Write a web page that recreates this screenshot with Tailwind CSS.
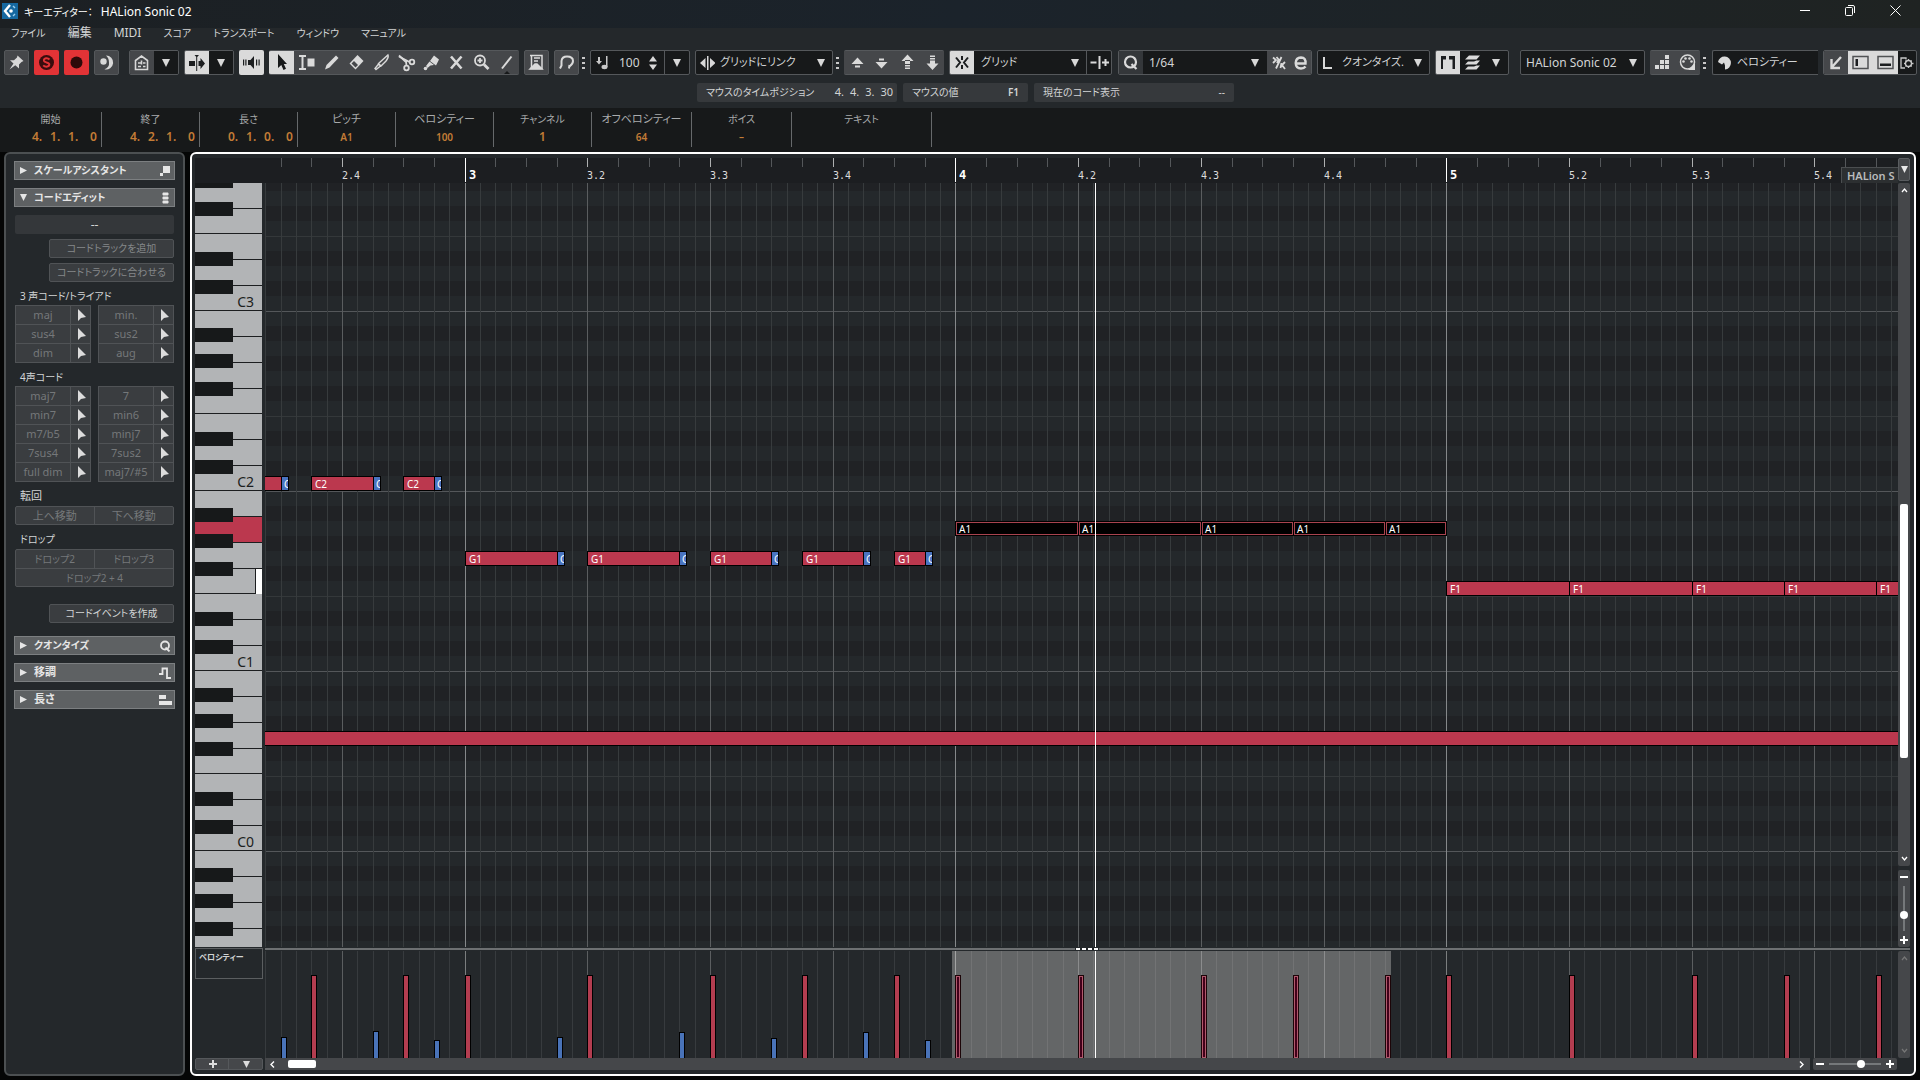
<!DOCTYPE html>
<html lang="ja">
<head>
<meta charset="utf-8">
<title>キーエディター： HALion Sonic 02</title>
<script src="https://cdn.jsdelivr.net/npm/@tailwindcss/browser@4"></script>
</head>
<body class="flex min-h-screen flex-col overflow-x-hidden bg-[#050606] font-['Noto_Sans','Noto_Sans_CJK_JP',sans-serif] text-[11px] text-[#d2d4d5] [font-feature-settings:'palt']">

<header class="shrink-0 bg-[#24282b]">
  <!-- title bar -->
  <div class="flex h-7 items-center bg-linear-to-r from-[#1c2023] via-[#1b232b] to-[#1f2322] pl-[2px] text-xs text-white">
    <svg class="mt-[-6px] h-4 w-4" viewBox="0 0 16 16"><rect width="16" height="16" fill="#1668a0"/><path d="M8 2 3 8l5 6" fill="none" stroke="#fff" stroke-width="2.4"/><circle cx="9" cy="8" r="1.8" fill="#fff"/><path d="m11 3 2 2M11 13l2-2" stroke="#9cd0f0" stroke-width="1.4"/></svg>
    <h1 class="mt-[-4px] ml-[6px] flex gap-2"><span class="text-[10px] leading-[18px]">キーエディター：</span><span class="leading-[17px]">HALion Sonic 02</span></h1>
    <div class="mr-[2px] ml-auto flex pb-[7px]">
      <button aria-label="最小化" class="grid h-5 w-[45px] place-items-center"><svg class="h-[11px] w-[11px]" viewBox="0 0 11 11"><path d="M0 5.5h10" stroke="#fff"/></svg></button>
      <button aria-label="元に戻す" class="grid h-5 w-[45px] place-items-center"><svg class="h-[11px] w-[11px]" viewBox="0 0 11 11" fill="none" stroke="#fff"><rect x=".5" y="2.5" width="7" height="8" rx="1"/><path d="M3 .5h5Q9.500.5 9.500 2v6"/></svg></button>
      <button aria-label="閉じる" class="grid h-5 w-[45px] place-items-center"><svg class="h-[11px] w-[11px]" viewBox="0 0 11 11"><path d="m.5.5 10 10m0-10-10 10" stroke="#fff"/></svg></button>
    </div>
  </div>
  <!-- menu -->
  <nav class="flex h-[22px] items-center gap-[22px] pb-3 pl-[11px] text-[10px]">
    <a href="#">ファイル</a><a href="#" class="text-xs">編集</a><a href="#" class="text-xs">MIDI</a><a href="#">スコア</a><a href="#">トランスポート</a><a href="#">ウィンドウ</a><a href="#">マニュアル</a>
  </nav>

  <!-- toolbar -->
  <div class="flex h-[25px] gap-[5px] pr-1 pl-1 text-xs">
    <button aria-label="固定" class="w-[25px] shrink-0 rounded-xs border border-[#55585b] bg-[#45474a]"><svg viewBox="1 1 23 23"><path d="m13.500 5.500 6 5.500-2 1-2.500 2.500v4l-3.700-3.200L5.500 19.500 9.500 13.500 6 10.200h4l3-2.700z" fill="#d8d8d8"/></svg></button>
    <button aria-label="ソロ" class="w-[25px] shrink-0 rounded-xs bg-[#e23336]"><svg viewBox="0 0 25 25"><circle cx="12.500" cy="12.500" r="7.500" fill="#3a0d0e"/><path d="M15.500 9.500q-1.500-1.500-3.500-1.200-2.500.5-2 2.500.4 1 2.500 1.600 2.800.6 2.800 2.200 0 2-2.800 2.100-2 0-3.300-1.300" fill="none" stroke="#e23336" stroke-width="2"/></svg></button>
    <button aria-label="録音" class="w-[25px] shrink-0 rounded-xs bg-[#e23336]"><svg viewBox="0 0 25 25"><circle cx="12.500" cy="12.500" r="6" fill="#2e0a0a"/></svg></button>
    <button aria-label="レトロスペクティブ録音" class="w-[25px] shrink-0 rounded-xs border border-[#55585b] bg-[#45474a]"><svg viewBox="1 1 23 23"><path d="M12 5.500a7 7 0 1 1-1.500 13.800 6 6 0 0 0 4.500-6.800Q15 8 12 5.500z" fill="#d8d8d8"/><circle cx="9.500" cy="11.500" r="3.200" fill="#d8d8d8"/></svg></button>

    <div class="ml-[5px] flex w-[50px] shrink-0 overflow-hidden rounded-xs border border-[#55585b]">
      <button aria-label="部分表示" class="w-6 bg-[#45474a]"><svg viewBox="1 0 24 24" fill="none" stroke="#d8d8d8" stroke-width="1.600"><path d="M6.500 18.500v-9L12.500 5l6 4.500v9zM9 12h3M14 12h2.500M9 15.500h3M14 15.500h2.500M12.500 9.500v4"/></svg></button>
      <button aria-label="部分表示の選択" class="grid flex-1 place-items-center bg-[#17191a]"><svg class="h-2 w-2" viewBox="0 0 8 8"><path d="M0 0h8L4 8z" fill="#d8d8d8"/></svg></button>
    </div>
    <div class="flex w-[50px] shrink-0 overflow-hidden rounded-xs border border-[#55585b]">
      <button aria-label="オートスクロール" class="w-6 bg-[#dadada]"><svg viewBox="1 0 24 24" fill="#1c1e20"><path d="M12.200 4h1v16h-1zM10.500 4h4.500l-2.200 2.500zM5 10h6v5H5zM14.500 10h2V7l4.500 5.500-4.500 5.500v-3h-2z"/></svg></button>
      <button aria-label="スクロール設定" class="grid flex-1 place-items-center bg-[#17191a]"><svg class="h-2 w-2" viewBox="0 0 8 8"><path d="M0 0h8L4 8z" fill="#d8d8d8"/></svg></button>
    </div>
    <button aria-label="音響フィードバック" class="w-[25px] shrink-0 rounded-xs bg-[#dadada]"><svg viewBox="0 0 25 25" fill="#1c1e20"><path d="M9 10h2.500L15 6v13l-3.500-4H9zM4 9.500h1.200v6H4zM6.300 9.500h1.200v6H6.300zM17 9.500h1.200v6H17zM19.500 9.500h1.200v6h-1.200z"/></svg></button>

    <div class="flex w-[250px] shrink-0 overflow-hidden rounded-xs border-y border-[#55585b] bg-[#45474a]">
      <button aria-label="選択" class="w-[25px] bg-[#dadada]"><svg viewBox="0 1 25 25"><path d="M9 4v14l3.300-3 2.200 5 2.500-1.200-2.200-4.800H18z" fill="#17191a"/></svg></button>
      <button aria-label="範囲" class="w-[25px]"><svg viewBox="0 1 25 25" fill="none" stroke="#dadada" stroke-width="2"><path d="M5 6h7M8.500 6v13M5 19h7"/><path d="M14.500 9.500h5v6h-5z" fill="#dadada"/></svg></button>
      <button aria-label="鉛筆" class="w-[25px]"><svg viewBox="0 1 25 25"><path d="m17 5.500 2.500 2.500-9 9.500L6 19.500 7.500 15z" fill="#dadada"/></svg></button>
      <button aria-label="消しゴム" class="w-[25px]"><svg viewBox="0 1 25 25"><path d="m13.500 5 6 6-8 8.500-6-6z" fill="#dadada"/><path d="m7.500 13.500 4 4 2.500-2.500-4-4z" fill="#45474a"/></svg></button>
      <button aria-label="トリム" class="w-[25px]"><svg viewBox="0 1 25 25"><path d="M19 5q1 2-2 6l-5 5-2.500-2.500zM9.500 14l2 2-4.500 3.500-1-1z" fill="none" stroke="#dadada" stroke-width="1.400"/></svg></button>
      <button aria-label="はさみ" class="w-[25px]"><svg viewBox="0 1 25 25" fill="none" stroke="#dadada" stroke-width="1.800"><path d="m5 6.500 10.500 5.500M12.500 16 12 11"/><path d="m5 5.500 7 6.500"/><circle cx="18" cy="12" r="2.300"/><circle cx="12.500" cy="18" r="2.300"/></svg></button>
      <button aria-label="のり" class="w-[25px]"><svg viewBox="0 1 25 25" fill="#dadada"><path d="m15 5.500 5 4-3 6-6-4.500zM10.500 11.500l4.500 3.500-3.500.5L8.500 18 7 16z"/><circle cx="6.500" cy="18.500" r="1.800"/></svg></button>
      <button aria-label="ミュート" class="w-[25px]"><svg viewBox="0 1 25 25"><path d="m7 6.500 10.500 12M17.500 6.500 7 18.500" stroke="#dadada" stroke-width="2.600"/></svg></button>
      <button aria-label="ズーム" class="w-[25px]"><svg viewBox="0 1 25 25" fill="none" stroke="#dadada" stroke-width="1.800"><circle cx="11" cy="10.500" r="5"/><path d="M8.500 10.500h5M11 8v5"/><path d="m15 14.500 4.500 4.500" stroke-width="2.800"/></svg></button>
      <button aria-label="ライン" class="w-[25px]"><svg viewBox="0 1 25 25"><path d="M17.500 6.500 8 18.500" stroke="#dadada" stroke-width="2"/><path d="m9 25 4-4 4 4z" fill="#17191a"/></svg></button>
    </div>
    <button aria-label="コントローラー" class="w-[25px] shrink-0 rounded-xs border border-[#55585b] bg-[#45474a]"><svg viewBox="1 1 23 23" fill="none" stroke="#dadada" stroke-width="1.500"><path d="M6 5.500h12v13H6M7.500 5v14M10 8h6M10 11h4"/><path d="m6 19 5-5h2l5 5z" fill="#dadada"/></svg></button>
    <button aria-label="カーブ" class="w-[25px] shrink-0 rounded-xs border border-[#55585b] bg-[#45474a]"><svg viewBox="1 1 23 23" fill="none" stroke="#dadada" stroke-width="2"><path d="m6 18.500 1.500-3V11Q8 6.500 13 6.500q6 0 6 4.500 0 3-3.500 5.500M15 18.500l.5-3.500"/></svg></button>
    <div class="-ml-0.5 flex w-[3px] shrink-0 flex-col justify-center gap-[3px]"><i class="h-[2px] bg-[#c8c8c8]"></i><i class="h-[2px] bg-[#c8c8c8]"></i><i class="h-[2px] bg-[#c8c8c8]"></i></div>

    <div class="flex w-[100px] shrink-0 items-center rounded-xs border border-[#55585b] bg-[#17191a]">
      <svg class="ml-[3px] h-[17px] w-[17px] shrink-0" viewBox="0 0 17 17" fill="#c8c8c8"><path d="M2 7h2V3h2v4h2L5 10.500zM12 2h1.500v11H12z"/><ellipse cx="10.500" cy="13" rx="3" ry="2.200"/></svg>
      <input aria-label="ノートベロシティー" value="100" class="ml-2 w-[26px] min-w-0 bg-transparent text-[#d2d4d5]">
      <svg class="ml-1 h-4 w-2 shrink-0" viewBox="0 0 8 16" fill="#d8d8d8"><path d="M0 6.500h8L4 1zM0 9.500h8L4 15z"/></svg>
      <button aria-label="ベロシティーの選択" class="ml-auto grid h-full w-[25px] shrink-0 place-items-center border-l border-[#55585b]"><svg class="h-2 w-2" viewBox="0 0 8 8"><path d="M0 0h8L4 8z" fill="#d8d8d8"/></svg></button>
    </div>
    <label class="relative flex w-[138px] shrink-0 items-center rounded-xs border border-[#55585b] bg-[#17191a]">
      <svg class="ml-1 h-4 w-[15px] shrink-0" viewBox="0 0 15 16" fill="#d8d8d8"><path d="M7 1h1.500v14H7zM5.500 3v10L0 8zM10 3l5.500 5L10 13z" /></svg>
      <select aria-label="グリッドにリンク" class="ml-[5px] w-full appearance-none bg-transparent text-[11px]"><option>グリッドにリンク</option></select>
      <svg class="pointer-events-none absolute right-[7px] h-2 w-2" viewBox="0 0 8 8"><path d="M0 0h8L4 8z" fill="#d8d8d8"/></svg>
    </label>
    <div class="-ml-0.5 flex w-[3px] shrink-0 flex-col justify-center gap-[3px]"><i class="h-[2px] bg-[#c8c8c8]"></i><i class="h-[2px] bg-[#c8c8c8]"></i><i class="h-[2px] bg-[#c8c8c8]"></i></div>

    <div class="flex w-[100px] shrink-0 rounded-xs border-y border-[#55585b] bg-[#45474a]">
      <button aria-label="上へ" class="w-[25px]"><svg viewBox="0 1 25 25" fill="#dadada"><path d="M7.500 14h12l-6-6.500zM11 15.500h5v2h-5z"/></svg></button>
      <button aria-label="下へ" class="w-[25px]"><svg viewBox="0 1 25 25" fill="#dadada"><path d="M6.500 12h12l-6 6.500zM10 8.500h5v2h-5z"/></svg></button>
      <button aria-label="オクターブ上" class="w-[25px]"><svg viewBox="0 1 25 25" fill="#dadada"><path d="M7.500 11h12l-6-6.500zM11 10h5v4h-5zM11 15h5v1.500h-5zM11 17.500h5V19h-5z"/></svg></button>
      <button aria-label="オクターブ下" class="w-[25px]"><svg viewBox="0 1 25 25" fill="#dadada"><path d="M7.500 13.500h12l-6 6.500zM11 10.500h5v4h-5zM11 8h5v1.500h-5zM11 5.500h5V7h-5z"/></svg></button>
    </div>
    <div class="flex w-[163px] shrink-0 overflow-hidden rounded-xs border border-[#55585b] bg-[#17191a]">
      <button aria-label="スナップ" class="w-6 bg-[#dadada]"><svg viewBox="0 0 24 23" fill="none" stroke="#1c1e20" stroke-width="2"><path d="M12 5v4M12 14v4M6 6.500 10 11.500 6 16.500M18 6.500 14 11.500l4 5"/></svg></button>
      <label class="relative flex flex-1 items-center">
        <select aria-label="スナップタイプ" class="ml-[7px] w-full appearance-none bg-transparent text-[11px]"><option>グリッド</option></select>
        <svg class="pointer-events-none absolute right-[7px] h-2 w-2" viewBox="0 0 8 8"><path d="M0 0h8L4 8z" fill="#d8d8d8"/></svg>
      </label>
      <button aria-label="スナップオン/オフ" class="w-[25px] border-l border-[#55585b]"><svg viewBox="0 0 24 23" fill="none" stroke="#dadada" stroke-width="2"><path d="M3.500 11.500h6M12.500 5v13M15 11.500h7M18.500 8v7"/></svg></button>
    </div>
    <div class="ml-px flex w-[194px] shrink-0 overflow-hidden rounded-xs border border-[#55585b] bg-[#17191a]">
      <button aria-label="クオンタイズを適用" class="w-6 bg-[#34373a]"><svg viewBox="0 0 24 23" fill="none" stroke="#dadada" stroke-width="2.200"><circle cx="11.500" cy="11" r="5.500"/><path d="m12.500 13 5 5"/></svg></button>
      <label class="relative flex flex-1 items-center">
        <select aria-label="クオンタイズプリセット" class="ml-[6px] w-full appearance-none bg-transparent text-xs"><option>1/64</option></select>
        <svg class="pointer-events-none absolute right-2 h-2 w-2" viewBox="0 0 8 8"><path d="M0 0h8L4 8z" fill="#d8d8d8"/></svg>
      </label>
      <button aria-label="ソフトクオンタイズ" class="w-[22px] bg-[#45474a]"><svg viewBox="-2 0 22 23" fill="none" stroke="#dadada" stroke-width="1.800"><path d="M12.500 6 7 17.500M4 6.500l3 2.500-3 3M7.500 6l2 2.500L8 12M16 11l-3 3 3 4M12.500 12l-1 5"/></svg></button>
      <button aria-label="クオンタイズパネル" class="w-[22px] bg-[#45474a]"><svg viewBox="-1 0 22 23" fill="none" stroke="#dadada" stroke-width="2.400"><path d="M6 12.500h9.500Q16 6.500 11 6.500q-5.200.3-5.300 5.500.2 5.500 5.300 5.500 3 0 4.500-2"/></svg></button>
    </div>
    <label class="relative flex w-[113px] shrink-0 items-center rounded-xs border border-[#55585b] bg-[#17191a]">
      <svg class="ml-[5px] h-3 w-[9px] shrink-0" viewBox="0 0 9 12"><path d="M1 0v11h8" fill="none" stroke="#d8d8d8" stroke-width="2"/></svg>
      <select aria-label="長さクオンタイズ" class="ml-[10px] w-full appearance-none bg-transparent text-[11px]"><option>クオンタイズ.</option></select>
      <svg class="pointer-events-none absolute right-[7px] h-2 w-2" viewBox="0 0 8 8"><path d="M0 0h8L4 8z" fill="#d8d8d8"/></svg>
    </label>
    <div class="flex w-[74px] shrink-0 overflow-hidden rounded-xs border border-[#55585b] bg-[#17191a]">
      <button aria-label="パート境界線" class="w-6 bg-[#dadada]"><svg viewBox="0 0 24 23" fill="#1c1e20"><path d="M5 5h5v3.500H7V18H5zM13 5h6v13h-2.500V8.500H13z"/></svg></button>
      <button aria-label="レイヤー" class="w-6"><svg viewBox="0 0 24 23" fill="#dadada"><path d="M9 4.500h11l-3.500 4H5zM16.500 9.500H20l-3.500 4H5l3-3h6zM16.500 14.500H20l-3.500 4H5l3-3h6z"/></svg></button>
      <button aria-label="レイヤーの選択" class="grid flex-1 place-items-center"><svg class="h-2 w-2" viewBox="0 0 8 8"><path d="M0 0h8L4 8z" fill="#d8d8d8"/></svg></button>
    </div>
    <label class="relative ml-[6px] flex w-[125px] shrink-0 items-center rounded-xs border border-[#55585b] bg-[#17191a]">
      <select aria-label="パート" class="ml-[5px] w-full appearance-none bg-transparent text-xs"><option>HALion Sonic 02</option></select>
      <svg class="pointer-events-none absolute right-[7px] h-2 w-2" viewBox="0 0 8 8"><path d="M0 0h8L4 8z" fill="#d8d8d8"/></svg>
    </label>
    <div class="flex w-[50px] shrink-0 rounded-xs border-y border-[#55585b] bg-[#45474a]">
      <button aria-label="ステップ入力" class="w-[25px]"><svg viewBox="0 1 25 24" fill="#dadada"><path d="M5 15h4v4H5zM10 15h4v4h-4zM15 15h4v4h-4zM10 10h4v4h-4zM15 10h4v4h-4zM15 5h4v4h-4z"/></svg></button>
      <button aria-label="MIDI入力" class="w-[25px]"><svg viewBox="0 1 25 24"><circle cx="12.500" cy="12" r="7" fill="none" stroke="#dadada" stroke-width="1.500"/><g fill="#dadada"><circle cx="8.500" cy="11.500" r="1.300"/><circle cx="10.500" cy="8.500" r="1.300"/><circle cx="14.500" cy="8.500" r="1.300"/><circle cx="16.500" cy="11.500" r="1.300"/><path d="M20 13v7h-7z"/></g></svg></button>
    </div>
    <div class="-ml-0.5 flex w-[3px] shrink-0 flex-col justify-center gap-[3px]"><i class="h-[2px] bg-[#c8c8c8]"></i><i class="h-[2px] bg-[#c8c8c8]"></i><i class="h-[2px] bg-[#c8c8c8]"></i></div>
    <label class="ml-px flex w-[106px] shrink-0 items-center rounded-l-xs border border-r-0 border-[#55585b] bg-[#17191a]">
      <svg class="ml-1 h-[15px] w-[15px] shrink-0" viewBox="0 0 15 15" fill="#dadada"><path d="M1 7a6.500 6.500 0 1 1 7 7.500v-4l-1-3-2 2z"/></svg>
      <select aria-label="イベントカラー" class="ml-[5px] w-full appearance-none bg-transparent text-[11px]"><option>ベロシティー</option></select>
    </label>
    <div class="flex w-[94px] shrink-0 overflow-hidden rounded-xs border border-[#55585b] bg-[#17191a]">
      <button aria-label="ロワーゾーンで開く" class="w-6 bg-[#45474a]"><svg viewBox="0 0 24 23" fill="none" stroke="#dadada" stroke-width="2.400"><path d="m17 6-9 10M7.500 8v9H16"/></svg></button>
      <button aria-label="左ゾーン" class="w-[25px] bg-[#dadada]"><svg viewBox="0 0 25 23"><path d="M5 5.500h15v12H5z" fill="none" stroke="#505254" stroke-width="1.500"/><path d="M7.500 8h2.500v7H7.500z" fill="#1c1e20"/></svg></button>
      <button aria-label="下ゾーン" class="w-[25px] bg-[#dadada]"><svg viewBox="0 0 25 23"><path d="M5 5.500h15v12H5z" fill="none" stroke="#505254" stroke-width="1.500"/><path d="M7 12.500h11v2.500H7z" fill="#1c1e20"/></svg></button>
      <button aria-label="ウィンドウレイアウト" class="grid flex-1 place-items-center"><svg class="h-[14px] w-[14px]" viewBox="0 0 14 14" fill="none" stroke="#c8c8c8" stroke-width="1.300"><path d="M5 12H1V2h5v1.500"/><circle cx="8.500" cy="7.500" r="3"/><path d="M8.500 3v2M8.500 10v2M4 7.500h2M11 7.500h2.500M5.500 4.500l1.200 1.200M11.700 4.500l-1.200 1.200M5.500 10.500l1.200-1.200M11.700 10.500l-1.200-1.200"/></svg></button>
    </div>
  </div>

  <!-- status line -->
  <div class="flex h-[33px] justify-center gap-[6px] pt-2 pl-[11px] text-[10px]">
    <div class="flex h-[19px] w-[200px] items-center justify-between rounded-xs bg-[#36393c] pr-1 pl-[9px]"><span>マウスのタイムポジション</span><span class="flex gap-[6px] text-[11px]"><span>4.</span><span>4.</span><span>3.</span><span>30</span></span></div>
    <div class="flex h-[19px] w-[125px] items-center justify-between rounded-xs bg-[#36393c] pr-[9px] pl-[9px]"><span>マウスの値</span><span class="font-semibold">F1</span></div>
    <div class="flex h-[19px] w-[200px] items-center justify-between rounded-xs bg-[#36393c] pr-[9px] pl-[9px]"><span>現在のコード表示</span><span>--</span></div>
  </div>
</header>

<!-- info line -->
<dl class="flex h-[44px] shrink-0 bg-[#17191a] pt-1 text-center text-[10px] text-[#a9abac] [&_dd]:font-semibold [&_dd]:text-[#c37c36] [&_dt]:h-[17px] [&_dt]:leading-[14px] [&>div]:h-[35px] [&>div]:border-r [&>div]:border-[#66696b]">
  <div class="w-[102px]"><dt>開始</dt><dd class="mr-1 ml-8 flex justify-between text-xs"><span>4.</span><span>1.</span><span>1.</span><span class="pl-1">0</span></dd></div>
  <div class="w-[98px]"><dt>終了</dt><dd class="mr-1 ml-7 flex justify-between text-xs"><span>4.</span><span>2.</span><span>1.</span><span class="pl-1">0</span></dd></div>
  <div class="w-[98px]"><dt>長さ</dt><dd class="mr-1 ml-7 flex justify-between text-xs"><span>0.</span><span>1.</span><span>0.</span><span class="pl-1">0</span></dd></div>
  <div class="w-[98px]"><dt class="text-[11px]">ピッチ</dt><dd class="leading-[17px]">A1</dd></div>
  <div class="w-[98px]"><dt class="text-[11px]">ベロシティー</dt><dd class="leading-[17px]">100</dd></div>
  <div class="w-[98px]"><dt>チャンネル</dt><dd class="text-xs leading-[16px]">1</dd></div>
  <div class="w-[100px]"><dt class="text-[11px]">オフベロシティー</dt><dd class="leading-[17px]">64</dd></div>
  <div class="w-[100px]"><dt>ボイス</dt><dd class="leading-[17px]">–</dd></div>
  <div class="w-[140px]"><dt>テキスト</dt><dd></dd></div>
</dl>

<main class="flex flex-1 gap-[5px] pr-1 pb-1 pl-1">
  <!-- inspector -->
  <aside class="w-[181px] shrink-0 rounded-md border-2 border-[#4c5052] bg-[#24282b] px-2 pt-[7px] text-[10px]">
    <button class="flex h-[19px] w-full items-center border border-[#7c7f81] bg-[#5e6163] pr-[3px] pl-[5px] font-bold text-[#e6e6e6]"><svg class="h-[7px] w-[7px]" viewBox="0 0 7 7"><path d="M0 0v7l7-3.500z" fill="#e6e6e6"/></svg><span class="ml-[7px]">スケールアシスタント</span><svg class="ml-auto h-3 w-3" viewBox="0 0 12 12"><path d="M4 1h7v7H4zM1 8h3v3H1z" fill="#e6e6e6"/></svg></button>
    <button class="mt-2 flex h-[19px] w-full items-center border border-[#7c7f81] bg-[#5e6163] pr-[3px] pl-[5px] font-bold text-[#e6e6e6]"><svg class="h-[7px] w-[7px]" viewBox="0 0 7 7"><path d="M0 0h7L3.500 7z" fill="#e6e6e6"/></svg><span class="ml-[7px]">コードエディット</span><svg class="ml-auto h-3 w-3" viewBox="0 0 12 12"><path d="M4 .5h5Q10.500 2 9 3.500H4Q2.500 2 4 .5zM4 4.500h5q1.500 1.500 0 3H4Q2.500 6 4 4.500zM4 8.500h5q1.500 1.500 0 3H4q-1.500-1.500 0-3z" fill="#e6e6e6"/></svg></button>

    <div class="px-px">
      <div class="mt-2 h-[19px] rounded-xs bg-[#34373a] text-center text-xs leading-[19px]">--</div>
      <button class="mt-[5px] ml-auto block h-[19px] w-[125px] rounded-xs border border-[#505356] bg-[#3a3d40] leading-[15px] text-[#85888a]">コードトラックを追加</button>
      <button class="mt-[5px] ml-auto block h-[19px] w-[125px] rounded-xs border border-[#505356] bg-[#3a3d40] leading-[15px] text-[#85888a]">コードトラックに合わせる</button>

      <h2 class="mt-[5px] h-[19px] pl-[5px] leading-[18px]">3 声コード/トライアド</h2>
      <div id="triads" class="grid grid-cols-2 gap-x-[7px] text-[11px]"></div>
      <h2 class="mt-[5px] h-[19px] pl-[5px] leading-[18px]">4声コード</h2>
      <div id="fourths" class="grid grid-cols-2 gap-x-[7px] text-[11px]"></div>

      <h2 class="mt-[5px] h-[19px] pl-[5px] text-[11px] leading-[18px]">転回</h2>
      <div class="grid grid-cols-2 rounded-xs border border-[#505356] bg-[#3a3d40] text-[11px] text-[#75787a]">
        <button class="h-[17px] border-r border-[#505356] leading-[15px]">上へ移動</button><button class="h-[17px] leading-[15px]">下へ移動</button>
      </div>
      <h2 class="mt-[5px] h-[19px] pl-[5px] leading-[18px]">ドロップ</h2>
      <div class="grid grid-cols-2 rounded-xs border border-[#505356] bg-[#3a3d40] text-[#75787a]">
        <button class="h-[18px] border-r border-[#505356] leading-[14px]">ドロップ2</button><button class="h-[18px] leading-[14px]">ドロップ3</button>
        <button class="col-span-2 h-[18px] border-t border-[#505356] leading-[14px]">ドロップ2 + 4</button>
      </div>
      <button class="mt-[17px] ml-auto block h-[19px] w-[125px] rounded-xs border border-[#505356] bg-[#3a3d40] leading-[15px]">コードイベントを作成</button>
    </div>

    <button class="mt-[13px] flex h-[19px] w-full items-center border border-[#7c7f81] bg-[#5e6163] pr-[3px] pl-[5px] font-bold text-[#e6e6e6]"><svg class="h-[7px] w-[7px]" viewBox="0 0 7 7"><path d="M0 0v7l7-3.500z" fill="#e6e6e6"/></svg><span class="ml-[7px]">クオンタイズ</span><svg class="ml-auto h-3 w-3" viewBox="0 0 12 12" fill="none" stroke="#e6e6e6" stroke-width="1.800"><circle cx="6" cy="5.500" r="4"/><path d="m6.500 7.500 4 4"/></svg></button>
    <button class="mt-2 flex h-[19px] w-full items-center border border-[#7c7f81] bg-[#5e6163] pr-[3px] pl-[5px] text-[11px] font-bold text-[#e6e6e6]"><svg class="h-[7px] w-[7px]" viewBox="0 0 7 7"><path d="M0 0v7l7-3.500z" fill="#e6e6e6"/></svg><span class="ml-[7px]">移調</span><svg class="ml-auto h-3 w-3" viewBox="0 0 12 12" fill="none" stroke="#e6e6e6" stroke-width="1.800"><path d="M0 7h3.500V1.500h4.500V11h4"/></svg></button>
    <button class="mt-2 flex h-[19px] w-full items-center border border-[#7c7f81] bg-[#5e6163] pr-[2px] pl-[5px] text-[11px] font-bold text-[#e6e6e6]"><svg class="h-[7px] w-[7px]" viewBox="0 0 7 7"><path d="M0 0v7l7-3.500z" fill="#e6e6e6"/></svg><span class="ml-[7px]">長さ</span><svg class="ml-auto h-3 w-[13px]" viewBox="0 0 13 12"><path d="M0 1h7v4H0zM0 7h13v4H0z" fill="#e6e6e6"/></svg></button>
  </aside>

  <!-- editor -->
  <section class="grid min-w-0 flex-1 grid-cols-[67px_minmax(0,1fr)_12px] grid-rows-[25px_minmax(764px,1fr)_4px_107px_12px] rounded-md border-2 border-white bg-[#24282b] py-1 pr-1 pl-[3px]">
    <div class="bg-[#1c1e21]"></div>
    <div id="ruler" class="relative overflow-hidden bg-[#1c1e21] font-['DejaVu_Sans_Mono',monospace] text-[10px] text-[#dcdcdc]">
      <div class="absolute right-0 bottom-0 h-4 w-[57px] border-t border-l border-[#4b4e50] bg-[#2c2f31] pl-[5px] font-['Noto_Sans',sans-serif] text-[11px] leading-[15px] font-semibold whitespace-nowrap text-[#b9bbbc]">HALion S</div>
    </div>
    <button aria-label="ルーラー設定" class="mb-[2px] grid place-items-center rounded-xs border border-[#5a5d60] bg-[#45474a]"><svg class="h-[7px] w-[7px]" viewBox="0 0 8 8"><path d="M0 0h8L4 8z" fill="#e8e8e8"/></svg></button>

    <div id="keys" class="relative overflow-hidden bg-[#b2b4b6] text-sm text-[#1c1e20]"></div>
    <div class="relative ml-[3px] overflow-hidden">
      <svg id="grid" class="absolute inset-0 h-full w-full" shape-rendering="crispEdges"></svg>
      <div id="notes" class="absolute inset-0 text-[10px] text-white"></div>
      <div class="absolute top-0 bottom-0 left-[830px] w-px bg-white"></div>
    </div>
    <div class="flex flex-col">
      <div class="relative flex flex-1 flex-col items-center justify-between rounded-xs bg-[#45474a] py-1">
        <svg class="h-[7px] w-[7px]" viewBox="0 0 7 7"><path d="m1 5 2.500-3L6 5" fill="none" stroke="#fff" stroke-width="1.300"/></svg>
        <div class="absolute top-[47%] h-[254px] w-2 rounded-xs bg-white"></div>
        <svg class="h-[7px] w-[7px]" viewBox="0 0 7 7"><path d="m1 2 2.500 3L6 2" fill="none" stroke="#fff" stroke-width="1.300"/></svg>
      </div>
      <div class="mt-1 flex h-[77px] flex-col items-center justify-between rounded-xs bg-[#45474a] pt-[3px] pb-[3px]">
        <button aria-label="縦ズームアウト"><svg class="h-2 w-2" viewBox="0 0 8 8"><path d="M0 4h8" stroke="#fff" stroke-width="2"/></svg></button>
        <div class="relative flex h-[45px] w-2 before:absolute before:inset-y-0 before:left-[3px] before:w-[2px] before:bg-[#75787a]"><input type="range" aria-label="縦ズーム" value="68" class="relative h-[45px] w-2 appearance-none bg-transparent [writing-mode:vertical-lr] [&::-webkit-slider-thumb]:h-2 [&::-webkit-slider-thumb]:w-2 [&::-webkit-slider-thumb]:appearance-none [&::-webkit-slider-thumb]:rounded-full [&::-webkit-slider-thumb]:bg-white"></div>
        <button aria-label="縦ズームイン"><svg class="h-2 w-2" viewBox="0 0 8 8"><path d="M0 4h8M4 0v8" stroke="#fff" stroke-width="2"/></svg></button>
      </div>
    </div>

    <div></div>
    <div class="relative col-span-2 ml-[3px] flex items-center">
      <div class="h-[2px] w-full bg-[#6d7072]"></div>
      <div class="absolute top-[1px] left-[810px] flex gap-[2px] bg-[#24282b] px-px"><i class="h-[2px] w-1 bg-white"></i><i class="h-[2px] w-1 bg-white"></i><i class="h-[2px] w-1 bg-white"></i><i class="h-[2px] w-1 bg-white"></i></div>
    </div>

    <div><div class="-mt-[3px] -mr-px h-[31px] border border-[#5b5e60] pl-[3px] text-[8px] leading-[15px] font-bold">ベロシティー</div></div>
    <div class="relative ml-[3px] overflow-hidden">
      <div class="absolute inset-y-0 left-[687px] w-[439px] bg-[#646667]"></div>
      <svg id="laneGrid" class="absolute inset-0 h-full w-full" shape-rendering="crispEdges"></svg>
      <div id="bars" class="absolute inset-0"></div>
      <div class="absolute top-0 bottom-0 left-[830px] w-px bg-white"></div>
    </div>
    <div class="flex flex-col items-center justify-between rounded-xs bg-[#45474a] py-1">
      <svg class="h-[7px] w-[7px]" viewBox="0 0 7 7"><path d="m1 5 2.500-3L6 5" fill="none" stroke="#777" stroke-width="1.200"/></svg>
      <svg class="h-[7px] w-[7px]" viewBox="0 0 7 7"><path d="m1 2 2.500 3L6 2" fill="none" stroke="#777" stroke-width="1.200"/></svg>
    </div>

    <div class="-mr-px grid grid-cols-2 rounded-xs border border-[#55585b] bg-[#45474a]">
      <button aria-label="レーンを追加" class="grid place-items-center border-r border-[#55585b] pl-px"><svg class="h-2 w-2" viewBox="0 0 8 8"><path d="M0 4h8M4 0v8" stroke="#dcdcdc" stroke-width="2"/></svg></button>
      <button aria-label="レーン設定" class="grid place-items-center pl-px"><svg class="h-[7px] w-[7px]" viewBox="0 0 8 8"><path d="M0 0h8L4 8z" fill="#dcdcdc"/></svg></button>
    </div>
    <div class="mr-px ml-[3px] flex gap-[3px]">
      <div class="flex flex-1 items-center bg-[#45474a] pr-[5px] pl-1">
        <svg class="h-[7px] w-[7px]" viewBox="0 0 7 7"><path d="M5 .5 2 3.500l3 3" fill="none" stroke="#fff" stroke-width="1.400"/></svg>
        <div class="ml-3 h-2 w-7 rounded-xs bg-white"></div>
        <svg class="ml-auto h-[7px] w-[7px]" viewBox="0 0 7 7"><path d="m2 .5 3 3-3 3" fill="none" stroke="#fff" stroke-width="1.400"/></svg>
      </div>
      <div class="flex w-[84px] items-center justify-between rounded-xs bg-[#45474a] px-[3px]">
        <button aria-label="横ズームアウト"><svg class="h-2 w-2" viewBox="0 0 8 8"><path d="M0 4h8" stroke="#fff" stroke-width="2"/></svg></button>
        <div class="relative flex h-2 w-[52px] before:absolute before:inset-x-0 before:top-[3px] before:h-[2px] before:bg-[#75787a]"><input type="range" aria-label="横ズーム" value="64" class="relative h-2 w-[52px] appearance-none bg-transparent [&::-webkit-slider-thumb]:h-2 [&::-webkit-slider-thumb]:w-2 [&::-webkit-slider-thumb]:appearance-none [&::-webkit-slider-thumb]:rounded-full [&::-webkit-slider-thumb]:bg-white"></div>
        <button aria-label="横ズームイン"><svg class="h-2 w-2" viewBox="0 0 8 8"><path d="M0 4h8M4 0v8" stroke="#fff" stroke-width="2"/></svg></button>
      </div>
    </div>
    <div></div>
  </section>
</main>

<script>
  // Time axis: one unit is a 32nd note, counted from bar 3.
  const UNIT = 15.335, ORIGIN = 200.25, FIRST = -13;
  const x = u => Math.floor(ORIGIN + u * UNIT);
  const ROW = 15, OCTAVE = 180, C3 = 128; // y of the line under C3
  const byId = id => document.getElementById(id);
  const last = Math.floor((byId('ruler').clientWidth - ORIGIN) / UNIT);

  // Chord buttons
  const cell = n => `<div class="-mt-px flex h-5 border border-[#505356] bg-[#3a3d40]"><button class="flex-1 border-r border-[#505356] leading-[16px] text-[#75787a]">${n}</button><button aria-label="${n} を適用" class="grid w-[19px] place-items-center pl-[2px]"><svg class="h-3 w-[9px]" viewBox="0 0 9 12"><path d="M1 0v12l3-3 5-1z" fill="#dcdcdc"/></svg></button></div>`;
  byId('triads').innerHTML = ['maj','min.','sus4','sus2','dim','aug'].map(cell).join('');
  byId('fourths').innerHTML = ['maj7','7','min7','min6','m7/b5','minj7','7sus4','7sus2','full dim','maj7/#5'].map(cell).join('');

  // Ruler
  let r = '';
  for (let u = -12; u < last; u += 2) {
    const bar = u % 32 === 0, beat = u % 8 === 0, left = x(u) + 3;
    r += `<i class="absolute top-0 w-px ${bar ? 'h-6 bg-white' : beat ? 'h-[9px] bg-[#aeb0b1]' : 'h-[9px] bg-[#54575a]'}" style="left:${left}px"></i>`;
    if (bar) r += `<b class="absolute top-[9px] text-xs leading-4 text-white" style="left:${left + 4}px">${3 + u / 32}</b>`;
    else if (beat) {
      const n = u + 32;
      r += `<span class="absolute top-[10px] leading-4" style="left:${left}px">${2 + Math.floor(n / 32)}.${(n % 32) / 8 + 1}</span>`;
    }
  }
  byId('ruler').insertAdjacentHTML('afterbegin', r);

  // Keyboard, one octave at a time
  let k = '';
  for (let o = -1; o < 6; o++) {
    const top = C3 + o * OCTAVE;
    if (o === 1) k += `<div class="absolute inset-x-0 h-[26px] bg-[#bb384e]" style="top:${top + 26}px"></div>`;
    for (const y of [25, 51, 77, 102, 128, 154, 179]) k += `<i class="absolute inset-x-0 h-px bg-[#1c1e20]" style="top:${top + y}px"></i>`;
    for (const y of [17, 43, 71, 121, 149]) k += `<i class="absolute left-0 h-[14px] w-[38px] bg-[#17191a]" style="top:${top + y}px"></i>`;
    if (o < 4 && top + OCTAVE < 764) k += `<span class="absolute right-2 leading-[18px]" style="top:${top + 162}px">C${2 - o}</span>`;
  }
  k += `<div class="absolute right-0 h-[25px] w-[7px] border-l border-[#1c1e20] bg-white" style="top:386px"></div>`;
  byId('keys').innerHTML = k;

  // Background grid
  const verticals = (bar, beat, minor) => {
    let s = '';
    for (let u = FIRST; u <= last; u++) s += `<rect x="${x(u)}" y="0" width="1" height="100%" fill="${u % 32 === 0 ? bar : u % 8 === 0 ? beat : minor}"/>`;
    return s;
  };
  let g = '';
  for (let o = -1; o < 6; o++) {
    const top = C3 + o * OCTAVE;
    for (const n of [1, 3, 5, 8, 10]) g += `<rect x="0" y="${top + n * ROW}" width="100%" height="${ROW}" fill="#202225"/>`;
    g += `<rect x="0" y="${top}" width="100%" height="1" fill="#54575a"/><rect x="0" y="${top + 7 * ROW}" width="100%" height="1" fill="#34383a"/>`;
  }
  byId('grid').innerHTML = g + verticals('#85888a', '#5a5d5f', '#373b3d');
  byId('laneGrid').innerHTML = verticals('rgba(255,255,255,.4)', 'rgba(255,255,255,.25)', 'rgba(255,255,255,.09)');

  // Notes: [start, end, row top, name, kind]
  const notes = [[-16,-12,293,'','r'],[-10,-6,293,'C2','r'],[-4,-2,293,'C2','r'],
    [0,6,368,'G1','r'],[8,14,368,'G1','r'],[16,20,368,'G1','r'],[22,26,368,'G1','r'],[28,30,368,'G1','r'],
    [32,40,338,'A1','s'],[40,48,338,'A1','s'],[48,54,338,'A1','s'],[54,60,338,'A1','s'],[60,64,338,'A1','s'],
    [64,72,398,'F1','r'],[72,80,398,'F1','r'],[80,86,398,'F1','r'],[86,92,398,'F1','r'],[92,98,398,'F1','r'],
    [-16,300,548,'','r']];
  const blues = [[-12,293,'C2',86],[-6,293,'C2',80],[-2,293,'C2',89],[6,368,'G1',86],[14,368,'G1',81],[20,368,'G1',87],[26,368,'G1',81],[30,368,'G1',89]];
  let h = '', v = '';
  for (const [a, b, y, name, kind] of notes) {
    const pos = `left:${x(a)}px;width:${x(b) - x(a) + 1}px;top:${y}px`;
    h += kind === 's'
      ? `<div class="absolute h-[15px] border border-black bg-black" style="${pos}"><div class="h-[13px] border border-[#a8434f] pl-[2px] leading-[12px]">${name}</div></div>`
      : `<div class="absolute h-[15px] border border-black bg-[#bb384e] pl-[3px] leading-[14px]" style="${pos}">${name}</div>`;
    if (a >= -10 && y !== 548) v += kind === 's'
      ? `<div class="absolute top-6 bottom-0 w-[6px] border border-b-0 border-[#1c0508] bg-[#42001a]" style="left:${x(a)}px"><div class="h-full border border-[#b0596c]"></div></div>`
      : `<div class="absolute top-6 bottom-0 w-[6px] border border-b-0 border-black bg-[#b33d50]" style="left:${x(a)}px"></div>`;
  }
  for (const [a, y, name, top] of blues) {
    h += `<div class="absolute h-[15px] w-2 overflow-hidden border border-black bg-[#4973c0] pl-[2px] leading-[14px]" style="left:${x(a)}px;top:${y}px">${name}</div>`;
    v += `<div class="absolute bottom-0 w-[6px] border border-b-0 border-black bg-[#4973b8]" style="left:${x(a)}px;top:${top}px"></div>`;
  }
  byId('notes').innerHTML = h;
  byId('bars').innerHTML = v;
</script>
</body>
</html>
